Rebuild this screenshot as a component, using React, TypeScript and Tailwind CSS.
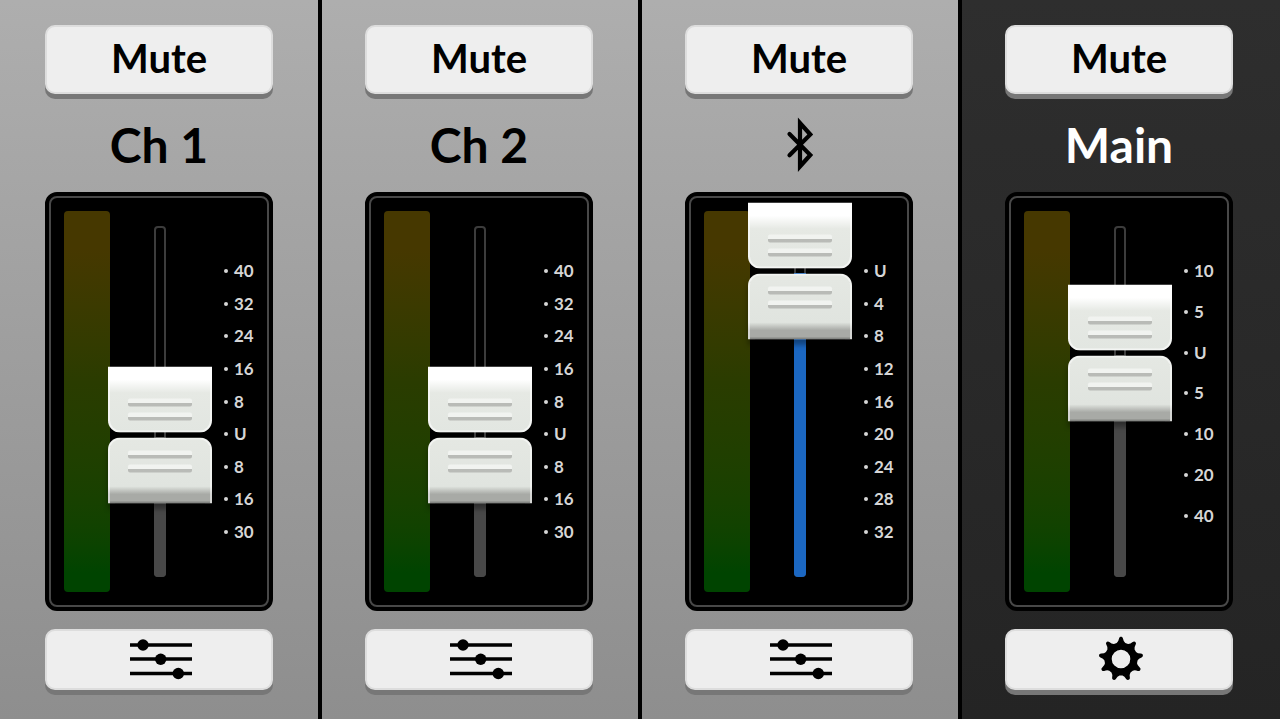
import { useState } from "react";
import type { ReactNode } from "react";

type Channel = {
  name: string;
  label: ReactNode;
  level: number;
  marks: string[];
  kind: "input" | "bluetooth" | "main";
};

function BluetoothIcon() {
  return (
    <svg width="30" height="56" viewBox="0 0 30 56" fill="none" aria-hidden="true">
      <path
        d="M5.500 17 26.300 38 16 49.500V6L26.300 17.500 5.500 38.200"
        stroke="black"
        strokeWidth="4.200"
        strokeLinecap="round"
        strokeMiterlimit="10"
      />
    </svg>
  );
}

function SlidersIcon() {
  return (
    <svg width="62" height="42" viewBox="0 0 62 42" aria-hidden="true">
      <path d="M0 7h62M0 21h62M0 35.500h62" stroke="black" strokeWidth="3.6" />
      <circle cx="13" cy="7" r="5.700" />
      <circle cx="30.700" cy="21.200" r="5.700" />
      <circle cx="48.300" cy="35.500" r="5.700" />
    </svg>
  );
}

const polar = (radius: number, degrees: number) => {
  const rad = ((degrees - 90) * Math.PI) / 180;
  return `${(24 + radius * Math.cos(rad)).toFixed(2)} ${(24 + radius * Math.sin(rad)).toFixed(2)}`;
};

const gearOutline =
  Array.from({ length: 9 }, (_, i) => {
    const a = i * 40;
    return `${i === 0 ? "M" : "L"}${polar(16.6, a - 15)}Q${polar(17.6, a - 8)} ${polar(20.6, a - 5.5)}C${polar(22.9, a - 4)} ${polar(22.9, a + 4)} ${polar(20.6, a + 5.5)}Q${polar(17.6, a + 8)} ${polar(16.6, a + 15)}`;
  }).join("") + "Z";

function GearIcon() {
  return (
    <svg width="48" height="48" viewBox="0 0 48 48" aria-hidden="true">
      <path
        fillRule="evenodd"
        d={`${gearOutline}M24 14.700a9.300 9.300 0 1 0 0 18.600a9.300 9.300 0 1 0 0 -18.600Z`}
      />
    </svg>
  );
}

const channels: Channel[] = [
  { name: "Ch 1", label: "Ch 1", level: 40.4, kind: "input", marks: ["40", "32", "24", "16", "8", "U", "8", "16", "30"] },
  { name: "Ch 2", label: "Ch 2", level: 40.4, kind: "input", marks: ["40", "32", "24", "16", "8", "U", "8", "16", "30"] },
  { name: "Bluetooth", label: <BluetoothIcon />, level: 87.5, kind: "bluetooth", marks: ["U", "4", "8", "12", "16", "20", "24", "28", "32"] },
  { name: "Main", label: "Main", level: 64.1, kind: "main", marks: ["10", "5", "U", "5", "10", "20", "40"] },
];

function Grip() {
  return (
    <span className="h-2 w-16 rounded-xs bg-linear-to-b from-[#f1f3f0] from-50% to-[#b9bbb7] to-60%" />
  );
}

function Knob() {
  return (
    <div className="flex flex-col gap-[5px]">
      <div className="flex h-[66px] flex-col items-center justify-end gap-[6px] rounded-b-xl border-2 border-t-0 border-white/60 bg-linear-to-b from-white from-20% via-[#e6e9e4] via-40% to-[#e2e6e1] bg-origin-border pb-[10px]">
        <Grip />
        <Grip />
      </div>
      <div className="flex h-[66px] flex-col items-center gap-[6px] rounded-t-xl border-2 border-b-0 border-white/50 bg-linear-to-b from-[#e5e8e3] via-[#e0e4df] via-74% to-[#a8aaa6] to-86% bg-origin-border pt-[11px] shadow-[0_5px_5px_rgba(0,0,0,0.35),inset_0_-2px_0_#858784]">
        <Grip />
        <Grip />
      </div>
    </div>
  );
}

function Fader({ channel }: { channel: Channel }) {
  const [level, setLevel] = useState(channel.level);
  const isBluetooth = channel.kind === "bluetooth";
  return (
    <div className="relative my-[15px] ml-11 w-3 rounded-sm border-2 border-[#3c3c3c] bg-black">
      <div
        className={`absolute -inset-x-0.5 -bottom-0.5 rounded-b-sm ${isBluetooth ? "bg-[#1b67c2]" : "bg-[#484848]"}`}
        style={{ height: `${level}%` }}
      />
      <div
        className="absolute left-1/2 w-[104px] -translate-x-1/2 translate-y-1/2"
        style={{ bottom: `${level}%` }}
      >
        <Knob />
      </div>
      <input
        type="range"
        min="0"
        max="100"
        step="0.1"
        value={level}
        aria-label={`${channel.name} level`}
        onChange={(event) => setLevel(Number(event.target.value))}
        className="absolute top-0 left-1/2 h-full w-[104px] -translate-x-1/2 cursor-pointer opacity-0 [direction:rtl] [writing-mode:vertical-lr]"
      />
    </div>
  );
}

const buttonClass =
  "flex shrink-0 cursor-pointer items-center justify-center rounded-[10px] border-2 border-[#dddddd] bg-[#eeeeee] shadow-[0_5px_0_#777777]";

function Strip({ channel }: { channel: Channel }) {
  const [muted, setMuted] = useState(false);
  const isMain = channel.kind === "main";
  return (
    <section
      aria-label={channel.name}
      className={`flex flex-col border-x-2 pt-[25px] pr-[45px] pb-[29px] pl-[43px] ${
        isMain
          ? "border-l-black border-r-transparent bg-linear-to-b from-[#2e2e2e] to-[#242424] text-white"
          : "border-black bg-linear-to-b from-[#aeaeae] to-[#8e8e8e] text-black first:border-l-transparent"
      }`}
    >
      <button
        type="button"
        aria-pressed={muted}
        onClick={() => setMuted(!muted)}
        className={`${buttonClass} h-[69px] pb-1 text-[40px] font-bold text-black`}
      >
        Mute
      </button>
      <h2 className="flex h-[98px] shrink-0 items-center justify-center pt-1 text-5xl font-bold">
        {channel.label}
      </h2>
      <div className="flex flex-1 rounded-xl border-4 border-black bg-black">
        <div className="flex flex-1 rounded-lg border-2 border-[#484848] p-[13px]">
          <div className="w-[46px] rounded-sm bg-linear-to-b from-[#463800] from-10% via-[#2a3c00] via-45% to-[#004400] to-95%" />
          <Fader channel={channel} />
          <ol
            className={`ml-[58px] flex flex-col justify-between pt-[50px] text-[17px] leading-5 font-bold text-[#d6d6d6] ${
              isMain ? "pb-[66px]" : "pb-[50px]"
            }`}
          >
            {channel.marks.map((mark, index) => (
              <li key={index} className="flex items-center gap-[6px]">
                <span className="size-1 rounded-full bg-[#d6d6d6]" />
                {mark}
              </li>
            ))}
          </ol>
        </div>
      </div>
      <button
        type="button"
        aria-label={isMain ? "Settings" : `${channel.name} equalizer`}
        className={`${buttonClass} mt-[18px] h-[61px] pb-0.5 pl-1 text-black`}
      >
        {isMain ? <GearIcon /> : <SlidersIcon />}
      </button>
    </section>
  );
}

export default function App() {
  return (
    <main className="grid min-h-screen grid-cols-4 font-['Lato','Open_Sans',sans-serif]">
      {channels.map((channel) => (
        <Strip key={channel.name} channel={channel} />
      ))}
    </main>
  );
}
